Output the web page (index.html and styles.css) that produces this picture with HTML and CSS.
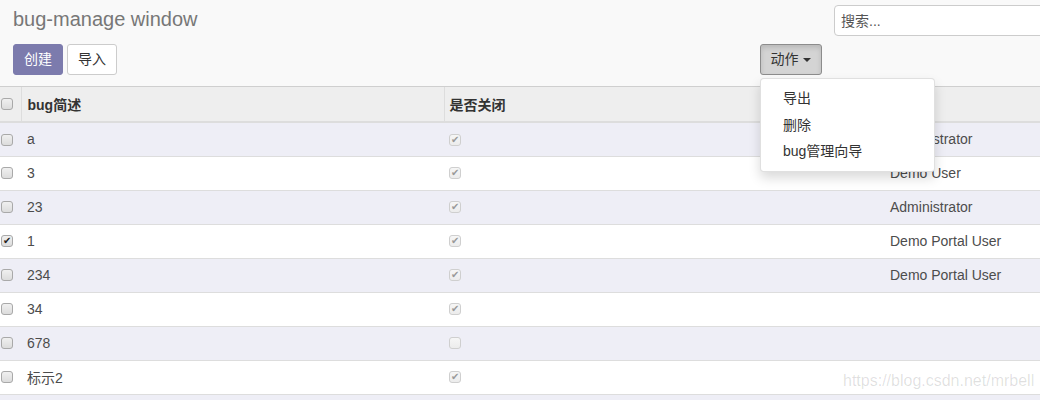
FILE: index.html
```html
<!DOCTYPE html>
<html lang="zh">
<head>
<meta charset="utf-8">
<title>bug-manage window</title>
<link rel="stylesheet" href="styles.css">
</head>
<body>
<div class="panel">
  <div class="panel-left">
    <div class="title">bug-manage window</div>
    <div class="btns">
      <button class="btn btn-primary">创建</button>
      <button class="btn btn-default">导入</button>
    </div>
  </div>
  <div class="panel-mid">
    <div class="action-wrap">
      <button class="btn btn-action">动作 <span class="caret"></span></button>
      <ul class="dropdown">
        <li>导出</li>
        <li>删除</li>
        <li>bug管理向导</li>
      </ul>
    </div>
  </div>
  <div class="panel-right">
    <input class="search" type="text" placeholder="搜索...">
  </div>
</div>
<table class="list">
  <thead>
    <tr>
      <th class="c-sel"><span class="cb"></span></th>
      <th class="c-name">bug简述</th>
      <th class="c-closed">是否关闭</th>
      <th class="c-user">负责人</th>
    </tr>
  </thead>
  <tbody>
    <tr class="odd"><td class="c-sel"><span class="cb"></span></td><td>a</td><td class="c-closed"><span class="cb dis on">✔</span></td><td class="c-user">Administrator</td></tr>
    <tr><td class="c-sel"><span class="cb"></span></td><td>3</td><td class="c-closed"><span class="cb dis on">✔</span></td><td class="c-user">Demo User</td></tr>
    <tr class="odd"><td class="c-sel"><span class="cb"></span></td><td>23</td><td class="c-closed"><span class="cb dis on">✔</span></td><td class="c-user">Administrator</td></tr>
    <tr><td class="c-sel"><span class="cb on">✔</span></td><td>1</td><td class="c-closed"><span class="cb dis on">✔</span></td><td class="c-user">Demo Portal User</td></tr>
    <tr class="odd"><td class="c-sel"><span class="cb"></span></td><td>234</td><td class="c-closed"><span class="cb dis on">✔</span></td><td class="c-user">Demo Portal User</td></tr>
    <tr><td class="c-sel"><span class="cb"></span></td><td>34</td><td class="c-closed"><span class="cb dis on">✔</span></td><td class="c-user"></td></tr>
    <tr class="odd"><td class="c-sel"><span class="cb"></span></td><td>678</td><td class="c-closed"><span class="cb dis"></span></td><td class="c-user"></td></tr>
    <tr><td class="c-sel"><span class="cb"></span></td><td>标示2</td><td class="c-closed"><span class="cb dis on">✔</span></td><td class="c-user"></td></tr>
    <tr class="odd"><td class="c-sel"><span class="cb"></span></td><td></td><td class="c-closed"></td><td class="c-user"></td></tr>
  </tbody>
</table>
<div class="watermark">https://blog.csdn.net/mrbell</div>
</body>
</html>
```

FILE: styles.css
```css
* { box-sizing: border-box; }
html, body { margin: 0; padding: 0; }
body {
  width: 1040px;
  height: 400px;
  overflow: hidden;
  background: #fff;
  font-family: "Liberation Sans", Arial, "Noto Sans CJK SC", sans-serif;
  font-size: 14px;
  color: #4c4c4c;
  position: relative;
}
.panel {
  height: 87px;
  background: #f9f9f9;
  border-bottom: 1px solid #cfcfcf;
  display: flex;
  padding: 0 0 0 13px;
}
.panel-left { width: 747px; flex-shrink: 0; }
.title {
  font-size: 20px;
  color: #777;
  line-height: 24px;
  padding-top: 7px;
  height: 44px;
}
.btns { display: flex; gap: 4px; }
.btn {
  font-family: inherit;
  font-size: 14px;
  height: 31px;
  border-radius: 3px;
  padding: 0;
  margin: 0;
  line-height: 29px;
  text-align: center;
  white-space: nowrap;
  cursor: pointer;
}
.btn-primary {
  width: 50px;
  background: #7c7bad;
  border: 1px solid #7c7bad;
  color: #fff;
}
.btn-default {
  width: 50px;
  background: #fff;
  border: 1px solid #ccc;
  color: #333;
}
.panel-mid { width: 74px; flex-shrink: 0; padding-top: 44px; }
.action-wrap { position: relative; }
.btn-action {
  width: 62px;
  background: #d4d4d4;
  border: 1px solid #8c8c8c;
  color: #333;
  box-shadow: inset 0 3px 5px rgba(0,0,0,0.125);
}
.caret {
  display: inline-block;
  width: 0;
  height: 0;
  border-top: 4px solid #333;
  border-left: 4px solid transparent;
  border-right: 4px solid transparent;
  vertical-align: middle;
  margin-left: 1px;
}
.dropdown {
  position: absolute;
  top: 34px;
  left: 0;
  width: 175px;
  margin: 0;
  padding: 6px 0;
  list-style: none;
  background: #fff;
  border: 1px solid rgba(0,0,0,0.12);
  border-radius: 4px;
  box-shadow: 0 6px 12px rgba(0,0,0,0.15);
  z-index: 10;
}
.dropdown li {
  padding: 4px 22px;
  line-height: 18.5px;
  color: #333;
}
.panel-right { flex: 1; min-width: 0; padding-top: 5px; }
.search {
  width: 220px;
  height: 31px;
  border: 1px solid #ccc;
  border-radius: 4px;
  padding: 0 6px;
  font-family: inherit;
  font-size: 14px;
  background: #fff;
}
.search::placeholder { color: #555; }

.list {
  width: 1040px;
  border-collapse: collapse;
  table-layout: fixed;
}
.list th {
  height: 35px;
  background: #eee;
  text-align: left;
  font-weight: bold;
  color: #333;
  padding: 0 6px;
  border-left: 1px solid #ddd;
  border-bottom: 2px solid #ddd;
}
.list th:first-child { border-left: none; }
.list td {
  height: 34px;
  padding: 0 6px;
  border-bottom: 1px solid #ddd;
}
.list tr.odd td { background: #eeeef6; }
.c-sel { width: 21px; padding: 0 0 0 1px !important; }
.list th.c-name { width: 423px; }
.list th.c-closed { width: 439px; }
.c-closed { padding-left: 5px !important; }
.c-user { padding-left: 7px !important; }
.cb {
  display: inline-block;
  width: 12px;
  height: 12px;
  border: 1px solid #a9a9a9;
  border-radius: 3px;
  background: linear-gradient(#f0f0f0, #dcdcdc);
  vertical-align: middle;
  font-size: 10px;
  line-height: 10px;
  text-align: center;
  color: #222;
  position: relative;
  top: -1px;
}
.cb.dis {
  border-color: #cfcfcf;
  background: linear-gradient(#f6f6f6, #ececec);
  color: #999;
}
.watermark {
  position: absolute;
  left: 843px;
  top: 372px;
  font-size: 16px;
  color: rgba(0,0,0,0.13);
  pointer-events: none;
}
```
